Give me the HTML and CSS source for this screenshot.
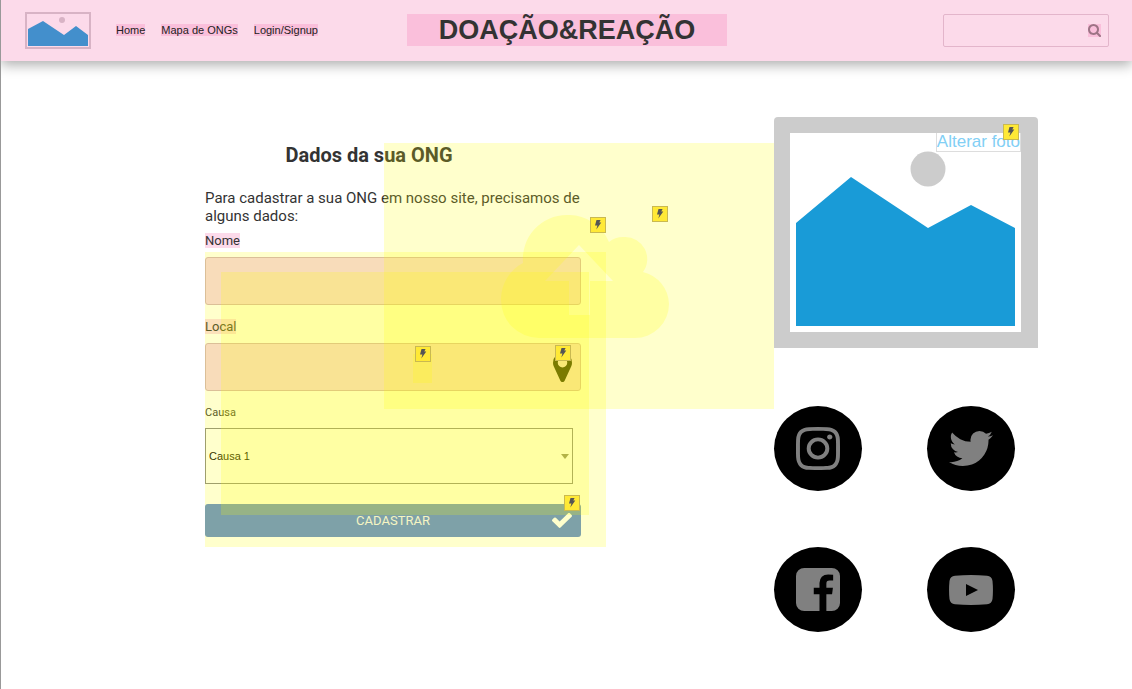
FILE: index.html
```html
<!DOCTYPE html>
<html lang="pt-BR">
<head>
<meta charset="utf-8">
<meta name="viewport" content="width=device-width, initial-scale=1">
<title>Doação&amp;Reação</title>
<link rel="stylesheet" href="styles.css">
</head>
<body>
<svg class="defs" aria-hidden="true">
  <symbol id="bolt" viewBox="0 0 14 14"><path d="M5.500 2H9.600L8.300 4.600H10.300L5.300 11.600L6.400 7.400H4z" fill="#555"/></symbol>
</svg>
<header class="topbar">
  <div class="topbar-left">
    <a class="logo" href="#" aria-label="Início">
      <svg viewBox="0 0 66 37" width="66" height="37">
        <rect x="1" y="1" width="64" height="35" fill="none" stroke="#d8b3c5" stroke-width="2"/>
        <circle cx="37" cy="8" r="3" fill="#d8b3c5"/>
        <path d="M3 17L18 9L39 23L51 14L63 23V34H3z" fill="#438fcc"/>
      </svg>
    </a>
    <nav class="nav">
      <a href="#">Home</a>
      <a href="#">Mapa de ONGs</a>
      <a href="#">Login/Signup</a>
    </nav>
  </div>
  <h1 class="brand">DOAÇÃO&amp;REAÇÃO</h1>
  <div class="search">
    <input type="search" aria-label="Buscar">
    <button type="button" aria-label="Pesquisar">
      <svg viewBox="64 128 1664 1664" width="13" height="13"><path fill="#9d7486" d="M1216 832q0-185-131.500-316.500t-316.500-131.500-316.500 131.500-131.500 316.500 131.500 316.500 316.500 131.500 316.500-131.500 131.500-316.500zm512 832q0 52-38 90t-90 38q-54 0-90-38l-343-342q-179 124-399 124-143 0-273.500-55.500t-225-150-150-225-55.500-273.500 55.500-273.500 150-225 225-150 273.500-55.500 273.500 55.500 225 150 150 225 55.500 273.500q0 220-124 399l343 343q37 37 37 90z"/></svg>
    </button>
  </div>
</header>
<main class="page">
  <section class="register">
    <form class="form">
      <h2>Dados da sua ONG</h2>
      <p>Para cadastrar a sua ONG em nosso site, precisamos de alguns dados:</p>
      <label class="tag" for="nome">Nome</label>
      <input class="field" id="nome" type="text">
      <label class="tag spaced" for="local">Local</label>
      <div class="with-icon">
        <input class="field" id="local" type="text">
        <svg class="pin" viewBox="384 128 1024 1536" preserveAspectRatio="none" aria-hidden="true"><path d="M1152 640q0-106-75-181t-181-75-181 75-75 181 75 181 181 75 181-75 75-181zm256 0q0 109-33 179l-364 774q-16 33-47.500 52t-67.500 19-67.500-19-46.500-52l-365-774q-33-70-33-179 0-212 150-362t362-150 362 150 150 362z"/></svg>
      </div>
      <label class="small spaced" for="causa">Causa</label>
      <div class="select">
        <select id="causa"><option>Causa 1</option></select>
        <svg class="caret" viewBox="0 0 8 5" aria-hidden="true"><path d="M0 0H8L4 5z" fill="#8a8a70"/></svg>
      </div>
      <button class="submit" type="submit">CADASTRAR
        <svg class="check" viewBox="121 343 1550 1188" preserveAspectRatio="none" aria-hidden="true"><path fill="#fff" d="M1671 566q0 40-28 68l-724 724-136 136q-28 28-68 28t-68-28l-136-136-362-362q-28-28-28-68t28-68l136-136q28-28 68-28t68 28l294 295 656-657q28-28 68-28t68 28l136 136q28 28 28 68z"/></svg>
      </button>
    </form>
    <div class="hotspot hotspot-upload"></div>
    <div class="hotspot hotspot-form"></div>
    <div class="hotspot hotspot-fields"></div>
    <div class="hotspot hotspot-pin"></div>
    <svg class="cloud" viewBox="0 0 168 123" aria-hidden="true"><path fill="#ff0" fill-opacity=".2" fill-rule="evenodd" d="M38 123A38 38 0 0 1 0 85A41 41 0 0 1 22 48A44 44 0 0 1 66 0A44 44 0 0 1 108 27A22 22 0 0 1 124 22A22 22 0 0 1 142 57A34 34 0 0 1 168 89A34 34 0 0 1 134 123zM78 30L44 66H68V100H89V66H112z"/></svg>
    <span class="bolt bolt-form"><svg><use href="#bolt"/></svg></span>
    <span class="bolt bolt-upload"><svg><use href="#bolt"/></svg></span>
    <span class="bolt bolt-map"><svg><use href="#bolt"/></svg></span>
    <span class="bolt bolt-pin"><svg><use href="#bolt"/></svg></span>
    <span class="bolt bolt-submit"><svg><use href="#bolt"/></svg></span>
  </section>
  <aside class="side">
    <div class="photo">
      <svg viewBox="0 0 264 231" role="img" aria-label="Foto da ONG">
        <path d="M0 231V4Q0 0 4 0H260Q264 0 264 4V231z" fill="#ccc"/>
        <rect x="16" y="16" width="231" height="199" fill="#fff"/>
        <circle cx="154" cy="52" r="17.500" fill="#ccc"/>
        <path d="M22 106L77 60L154 111L197 88L241 111V209H22z" fill="#199bd7"/>
      </svg>
      <button class="change" type="button">Alterar foto</button>
      <span class="bolt bolt-photo"><svg><use href="#bolt"/></svg></span>
    </div>
    <div class="social">
      <a href="#" aria-label="Instagram"><svg viewBox="128 128 1536 1536" width="44" height="43" preserveAspectRatio="none"><path d="M1152 896q0-106-75-181t-181-75-181 75-75 181 75 181 181 75 181-75 75-181zm138 0q0 164-115 279t-279 115-279-115-115-279 115-279 279-115 279 115 115 279zm108-410q0 38-27 65t-65 27-65-27-27-65 27-65 65-27 65 27 27 65zm-502-220q-7 0-76.500-.5t-105.500 0-96.500 3-103 10-71.500 18.500q-50 20-88 58t-58 88q-11 29-18.500 71.500t-10 103-3 96.500 0 105.500.5 76.500-.5 76.500 0 105.500 3 96.500 10 103 18.500 71.500q20 50 58 88t88 58q29 11 71.500 18.500t103 10 96.500 3 105.500 0 76.500-.5 76.500.5 105.500 0 96.500-3 103-10 71.500-18.500q50-20 88-58t58-88q11-29 18.500-71.500t10-103 3-96.500 0-105.500-.5-76.500.5-76.500 0-105.500-3-96.500-10-103-18.500-71.500q-20-50-58-88t-88-58q-29-11-71.500-18.500t-103-10-96.500-3-105.500 0-76.500.5zm768 630q0 229-5 317-10 208-124 322t-322 124q-88 5-317 5t-317-5q-208-10-322-124t-124-322q-5-88-5-317t5-317q10-208 124-322t322-124q88-5 317-5t317 5q208 10 322 124t124 322q5 88 5 317z"/></svg></a>
      <a href="#" aria-label="Twitter"><svg viewBox="108 256 1576 1280" width="44" height="35" preserveAspectRatio="none"><path d="M1684 408q-67 98-162 167 1 14 1 42 0 130-38 259.500t-115.500 248.500-184.500 210.500-258 146-323 54.500q-271 0-496-145 35 4 78 4 225 0 401-138-105-2-188-64.500t-114-159.500q33 5 61 5 43 0 85-11-112-23-185.500-111.500t-73.500-205.500v-4q68 38 146 41-66-44-105-115t-39-154q0-88 44-163 121 149 294.500 238.500t371.500 99.500q-8-38-8-74 0-134 94.500-228.500t228.500-94.500q140 0 236 102 109-21 205-78-37 115-142 178 93-10 186-50z"/></svg></a>
      <a href="#" aria-label="Facebook"><svg viewBox="128 128 1536 1536" width="44" height="43" preserveAspectRatio="none"><path d="M1376 128q119 0 203.500 84.500t84.500 203.500v960q0 119-84.500 203.500t-203.500 84.500h-188v-595h199l30-232h-229v-148q0-56 23.500-84t91.500-28l122-1v-207q-63-9-178-9-136 0-217.500 80t-81.500 226v171h-200v232h200v595h-532q-119 0-203.500-84.500t-84.500-203.500v-960q0-119 84.500-203.500t203.500-84.500h960z"/></svg></a>
      <a href="#" aria-label="YouTube"><svg viewBox="0 0 44 30" width="44" height="30"><path fill-rule="evenodd" d="M6 .7Q22-.6 38 .7Q42.800 1 43.500 6Q44.400 15 43.500 24Q42.800 29 38 29.300Q22 30.600 6 29.300Q1.200 29 .5 24Q-.4 15 .5 6Q1.200 1 6 .7zM17 9V21L29 15z"/></svg></a>
    </div>
  </aside>
</main>
</body>
</html>
```
FILE: styles.css
```css
* {
  box-sizing: border-box;
}

body {
  margin: 0;
  min-height: 100vh;
  border-left: 1px solid #999;
  background: #fff;
  color: #333;
  font-family: Roboto, sans-serif;
}

button,
input,
select {
  margin: 0;
  font: inherit;
}

.defs {
  display: none;
}

/* Top bar */
.topbar {
  display: grid;
  grid-template-columns: 1fr 320px 1fr;
  align-items: center;
  height: 61px;
  padding: 0 23px 1px 24px;
  background: #fcdaea;
  box-shadow: 0 4px 12px rgba(0, 0, 0, .32);
  font-family: "Liberation Sans", Arial, sans-serif;
}

.topbar-left {
  display: flex;
  align-items: center;
  gap: 25px;
}

.logo svg {
  display: block;
}

.nav {
  display: flex;
  gap: 16px;
}

.nav a {
  background: #fabfdb;
  color: #222;
  font-size: 11px;
  line-height: 12px;
  text-decoration: none;
  white-space: nowrap;
}

.brand {
  margin: 0;
  background: #fabfdb;
  font-size: 27px;
  line-height: 32px;
  text-align: center;
}

.search {
  position: relative;
  justify-self: end;
}

.search input {
  display: block;
  width: 166px;
  height: 33px;
  padding: 0 28px 0 8px;
  border: 1px solid #e3b5cb;
  border-radius: 2px;
  background: transparent;
  font-size: 13px;
}

.search button {
  position: absolute;
  top: 10px;
  right: 8px;
  display: flex;
  padding: 0;
  border: 0;
  background: #fabfdb;
}

/* Page */
.page {
  display: grid;
  grid-template-columns: 376fr 264fr;
  column-gap: 193px;
  align-items: start;
  padding: 56px 94px 56px 204px;
}

.register {
  position: relative;
}

.form {
  display: flex;
  flex-direction: column;
  align-items: flex-start;
  padding-top: 26px;
}

.form h2 {
  align-self: stretch;
  margin: 0;
  padding-right: 48px;
  font-size: 20px;
  line-height: 24px;
  text-align: center;
}

.form p {
  margin: 22px 0 8px;
  font-size: 15px;
  line-height: 18px;
}

.tag {
  background: #fcdaea;
  font-size: 13px;
  line-height: 15px;
}

.small {
  font-size: 11px;
  line-height: 15px;
}

.spaced {
  margin-top: 14px;
}

.field {
  display: block;
  width: 100%;
  height: 48px;
  margin-top: 9px;
  padding: 0 12px;
  border: 1px solid #d3b0bf;
  border-radius: 3px;
  background: #f7d4e9;
  font-size: 15px;
}

.with-icon {
  position: relative;
  width: 100%;
}

.pin {
  position: absolute;
  right: 9px;
  bottom: 9px;
  width: 19px;
  height: 29px;
}

.select {
  position: relative;
  width: 98%;
  margin-top: 8px;
}

.select select {
  display: block;
  width: 100%;
  height: 56px;
  padding: 0 3px;
  border: 1px solid #888;
  border-radius: 0;
  appearance: none;
  background: #fff;
  color: #000;
  font-family: "Liberation Sans", Arial, sans-serif;
  font-size: 11px;
}

.caret {
  position: absolute;
  top: 26px;
  right: 4px;
  width: 8px;
  height: 5px;
}

.submit {
  position: relative;
  width: 100%;
  height: 33px;
  margin-top: 20px;
  padding: 0;
  border: 0;
  border-radius: 3px;
  background: #5e8ad2;
  color: #f3f3f3;
  font-size: 13px;
}

.check {
  position: absolute;
  top: 9px;
  right: 9px;
  width: 20px;
  height: 15px;
}

.hotspot {
  position: absolute;
  background: rgba(255, 255, 0, .2);
  pointer-events: none;
}

.hotspot-upload {
  top: 26px;
  left: 179px;
  width: 390px;
  height: 266px;
}

.hotspot-form {
  top: 135px;
  right: -25px;
  left: 0;
  height: 295px;
}

.hotspot-fields {
  top: 155px;
  right: -8px;
  left: 16px;
  height: 243px;
}

.hotspot-pin {
  top: 237px;
  left: 208px;
  width: 19px;
  height: 29px;
}

.cloud {
  position: absolute;
  top: 98px;
  left: 296px;
  width: 168px;
  height: 123px;
  pointer-events: none;
}

.bolt {
  position: absolute;
  width: 16px;
  height: 16px;
  border: 1px solid #c9b951;
  background: #ffe936;
  pointer-events: none;
}

.bolt svg {
  display: block;
  width: 14px;
  height: 14px;
}

.bolt-form {
  top: 100px;
  left: 385px;
}

.bolt-upload {
  top: 89px;
  left: 447px;
}

.bolt-map {
  top: 229px;
  left: 210px;
}

.bolt-pin {
  top: 228px;
  left: 350px;
}

.bolt-submit {
  top: 378px;
  left: 359px;
}

.bolt-photo {
  top: 7px;
  right: 19px;
}

/* Photo and social links */
.photo {
  position: relative;
}

.photo > svg {
  display: block;
  width: 100%;
}

.change {
  position: absolute;
  top: 16px;
  right: 17px;
  padding: 0;
  border: 1px solid #ddd;
  border-top: 0;
  background: transparent;
  color: #82cff5;
  font-family: "Liberation Sans", Arial, sans-serif;
  font-size: 17px;
  line-height: 18px;
}

.social {
  display: grid;
  grid-template-columns: 88px 88px;
  gap: 56px 65px;
  margin-top: 58px;
}

.social a {
  display: flex;
  align-items: center;
  justify-content: center;
  height: 85px;
  border-radius: 50%;
  background: #000;
}

.social svg {
  fill: #808080;
}
```
